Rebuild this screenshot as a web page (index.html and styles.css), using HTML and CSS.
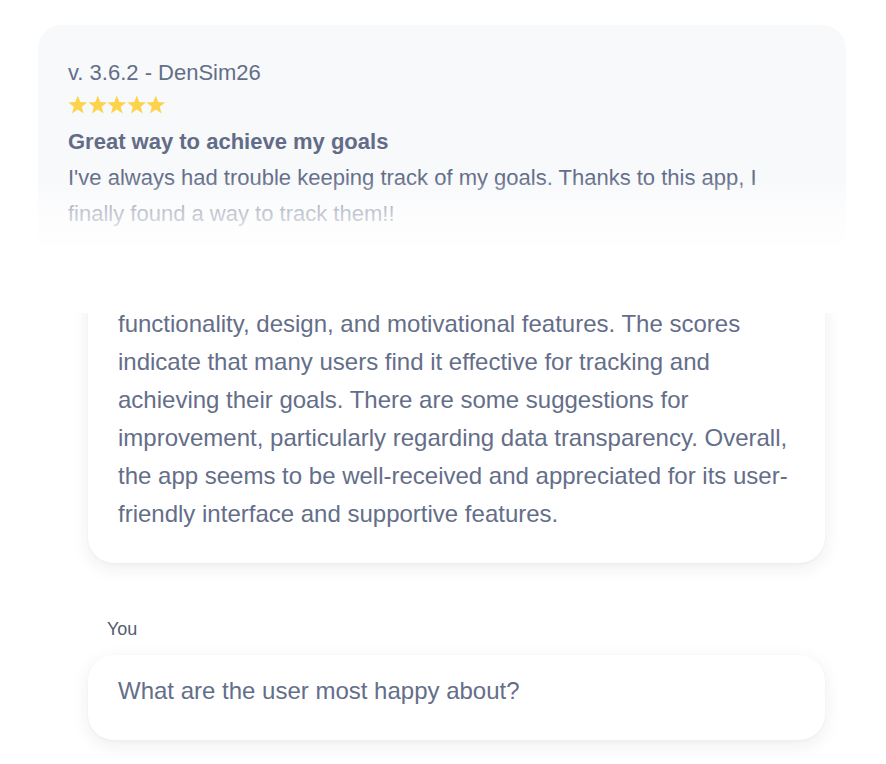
FILE: index.html
```html
<!DOCTYPE html>
<html lang="en">
<head>
<meta charset="utf-8">
<title>Review chat</title>
<link rel="stylesheet" href="styles.css">
</head>
<body>
<div class="page">
  <section class="review">
    <div class="review-meta">v. 3.6.2 - DenSim26</div>
    <div class="stars" aria-label="5 stars">
      <svg class="star" viewBox="0 0 24 24"><path d="M12 0.7L14.99 8.69 23.51 9.06 16.83 14.37 19.11 22.59 12 17.88 4.89 22.59 7.17 14.37 0.49 9.06 9.01 8.69Z"/></svg>
      <svg class="star" viewBox="0 0 24 24"><path d="M12 0.7L14.99 8.69 23.51 9.06 16.83 14.37 19.11 22.59 12 17.88 4.89 22.59 7.17 14.37 0.49 9.06 9.01 8.69Z"/></svg>
      <svg class="star" viewBox="0 0 24 24"><path d="M12 0.7L14.99 8.69 23.51 9.06 16.83 14.37 19.11 22.59 12 17.88 4.89 22.59 7.17 14.37 0.49 9.06 9.01 8.69Z"/></svg>
      <svg class="star" viewBox="0 0 24 24"><path d="M12 0.7L14.99 8.69 23.51 9.06 16.83 14.37 19.11 22.59 12 17.88 4.89 22.59 7.17 14.37 0.49 9.06 9.01 8.69Z"/></svg>
      <svg class="star" viewBox="0 0 24 24"><path d="M12 0.7L14.99 8.69 23.51 9.06 16.83 14.37 19.11 22.59 12 17.88 4.89 22.59 7.17 14.37 0.49 9.06 9.01 8.69Z"/></svg>
    </div>
    <h3 class="review-title">Great way to achieve my goals</h3>
    <p class="review-body">I've always had trouble keeping track of my goals. Thanks to this app, I finally found a way to track them!!</p>
    <div class="fade"></div>
  </section>

  <section class="chat">
    <div class="bubble">
      <p>Based on the reviews, the app is generally well-liked for its ease of use,<br>functionality, design, and motivational features. The scores indicate that many users find it effective for tracking and achieving their goals. There are some suggestions for improvement, particularly regarding data transparency. Overall, the app seems to be well-received and appreciated for its user-friendly interface and supportive features.</p>
    </div>
    <div class="sender">You</div>
    <div class="bubble bubble-user">
      <p>What are the user most happy about?</p>
    </div>
  </section>
</div>
</body>
</html>
```

FILE: styles.css
```css
* {
  box-sizing: border-box;
}

html, body {
  margin: 0;
  padding: 0;
  background: #ffffff;
}

body {
  font-family: "Liberation Sans", Arial, Helvetica, sans-serif;
  color: #646e89;
}

.page {
  width: 886px;
  height: 764px;
  display: flex;
  flex-direction: column;
  overflow: hidden;
}

.review {
  position: relative;
  margin: 25px 40px 0 38px;
  height: 223px;
  padding: 37px 30px 0 30px;
  background: #f8f9fb;
  border-radius: 24px 24px 0 0;
  overflow: hidden;
  flex: none;
}

.review-meta {
  font-size: 22px;
  line-height: 22px;
  height: 22px;
}

.stars {
  display: flex;
  height: 20px;
  margin-top: 11px;
  align-items: center;
}

.star {
  width: 19.6px;
  height: 19.6px;
  fill: #fdd34c;
  flex: none;
}

.review-title {
  margin: 9px 0 0 0;
  font-size: 22px;
  line-height: 36px;
  font-weight: 700;
  color: #626c86;
}

.review-body {
  margin: 0;
  font-size: 22px;
  line-height: 36px;
}

.fade {
  position: absolute;
  left: 0;
  right: 0;
  bottom: 0;
  height: 70px;
  background: linear-gradient(to bottom, rgba(255, 255, 255, 0) 0%, rgba(255, 255, 255, 0.55) 40%, rgba(255, 255, 255, 0.96) 100%);
}

.chat {
  flex: 1;
  margin-top: 65px;
  min-height: 0;
  display: flex;
  flex-direction: column;
  justify-content: flex-end;
  overflow: hidden;
  padding: 0 61px 24px 88px;
}

.bubble {
  flex: none;
  background: #ffffff;
  border-radius: 26px;
  box-shadow: 0 5px 18px rgba(30, 40, 70, 0.08), 0 1px 3px rgba(30, 40, 70, 0.03);
  padding: 28px 30px 30px 30px;
}

.bubble p {
  margin: 0;
  font-size: 24px;
  line-height: 38px;
  color: #646e89;
}

.bubble-user {
  padding: 17px 30px 30px 30px;
}

.sender {
  flex: none;
  margin: 54px 0 14px 19px;
  font-size: 18px;
  line-height: 24px;
  color: #545c6e;
}
```
